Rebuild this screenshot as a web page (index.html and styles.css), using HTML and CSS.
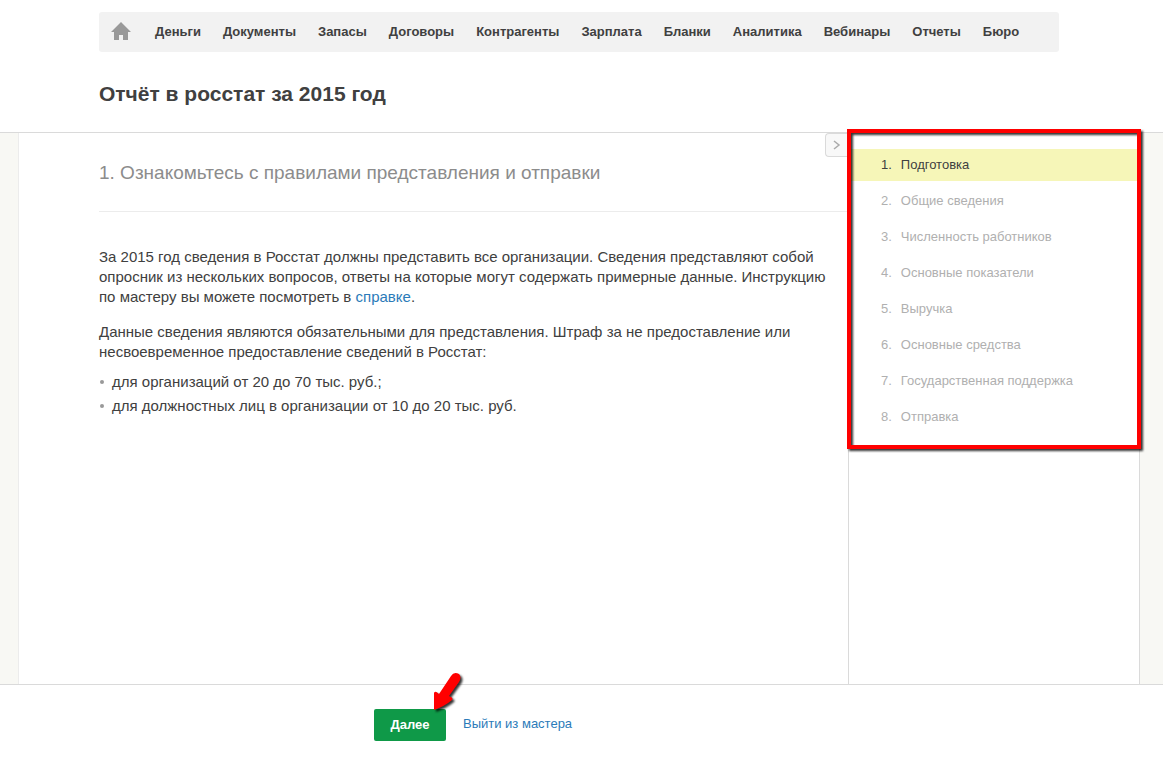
FILE: index.html
```html
<!DOCTYPE html>
<html lang="ru">
<head>
    <meta charset="UTF-8">
    <meta name="viewport" content="width=device-width, initial-scale=1.0">
    <title>Отчёт в росстат за 2015 год</title>
    <link rel="stylesheet" href="styles.css">
</head>
<body>
    <header class="header">
        <nav class="menu">
            <a class="menu-home" href="#" aria-label="Главная">
                <svg width="20" height="18" viewBox="0 0 20 18">
                    <path d="M10 0 L20 10 H17 V18 H12 V13 H8 V18 H3 V10 H0 Z" fill="#999"/>
                </svg>
            </a>
            <a href="#">Деньги</a>
            <a href="#">Документы</a>
            <a href="#">Запасы</a>
            <a href="#">Договоры</a>
            <a href="#">Контрагенты</a>
            <a href="#">Зарплата</a>
            <a href="#">Бланки</a>
            <a href="#">Аналитика</a>
            <a href="#">Вебинары</a>
            <a href="#">Отчеты</a>
            <a href="#">Бюро</a>
        </nav>
        <h1 class="page-title">Отчёт в росстат за 2015 год</h1>
    </header>

    <div class="wizard">
        <main class="content">
            <button class="toggle" type="button" aria-label="Свернуть">
                <svg width="8" height="10" viewBox="0 0 8 10">
                    <path d="M1 1 L6 5 L1 9" fill="none" stroke="#aaa" stroke-width="1.5"/>
                </svg>
            </button>
            <h2 class="step-title">1. Ознакомьтесь с правилами представления и отправки</h2>
            <div class="text">
                <p>За 2015 год сведения в Росстат должны представить все организации. Сведения представляют собой опросник из нескольких вопросов, ответы на которые могут содержать примерные данные. Инструкцию по мастеру вы можете посмотреть в <a href="#">справке</a>.</p>
                <p>Данные сведения являются обязательными для представления. Штраф за не предоставление или несвоевременное предоставление сведений в Росстат:</p>
                <ul>
                    <li>для организаций от 20 до 70 тыс. руб.;</li>
                    <li>для должностных лиц в организации от 10 до 20 тыс. руб.</li>
                </ul>
            </div>
        </main>
        <aside class="sidebar">
            <div class="steps-box">
                <ol class="steps">
                    <li class="active"><span>1.</span>Подготовка</li>
                    <li><span>2.</span>Общие сведения</li>
                    <li><span>3.</span>Численность работников</li>
                    <li><span>4.</span>Основные показатели</li>
                    <li><span>5.</span>Выручка</li>
                    <li><span>6.</span>Основные средства</li>
                    <li><span>7.</span>Государственная поддержка</li>
                    <li><span>8.</span>Отправка</li>
                </ol>
                <div class="frame"></div>
            </div>
        </aside>
    </div>

    <footer class="footer">
        <div class="next">
            <button class="btn-next" type="button">Далее</button>
            <svg class="arrow" width="34" height="44" viewBox="0 0 34 44">
                <path d="M3 42 L3 25 Q4 22 8 26 L20 8 Q23 3 28 6 Q31 9 28 14 L18 28 Q23 30 21 32 Q14 38 3 42 Z" fill="#f00"/>
            </svg>
        </div>
        <a class="exit" href="#">Выйти из мастера</a>
    </footer>
</body>
</html>
```
FILE: styles.css
```css
* {
    box-sizing: border-box;
}
body {
    margin: 0;
    min-height: 100vh;
    display: flex;
    flex-direction: column;
    font-family: "Liberation Sans", Arial, sans-serif;
    font-size: 15px;
    line-height: 20px;
    color: #404040;
    background-color: #fff;
}
a {
    color: #2b7bb9;
    text-decoration: none;
}
.header {
    padding: 12px 104px 26px 99px;
}
.menu {
    display: flex;
    align-items: center;
    gap: 22px;
    height: 40px;
    padding: 0 12px;
    background-color: #f2f2f2;
    border-radius: 3px;
    font-size: 13px;
    font-weight: bold;
}
.menu a {
    color: #404040;
}
.menu .menu-home {
    display: flex;
    padding: 0 2px 2px 0;
}
.page-title {
    margin: 30px 0 0;
    font-size: 21px;
    line-height: 24px;
}
.wizard {
    flex: 1;
    display: flex;
    padding: 0 23px 0 18px;
    background-color: #f8f8f4;
    border-top: 1px solid #dadada;
    border-bottom: 1px solid #dadada;
}
.content {
    position: relative;
    flex: 1;
    padding-left: 80px;
    background-color: #fff;
    border-left: 1px solid #ececec;
}
.toggle {
    position: absolute;
    top: 0;
    right: 0;
    width: 23px;
    height: 24px;
    padding: 0;
    background-color: #f8f8f8;
    border: 1px solid #dadada;
    border-right: none;
    border-radius: 4px 0 0 4px;
}
.step-title {
    margin: 0;
    padding: 28px 0 26px;
    border-bottom: 1px solid #ececec;
    font-size: 19px;
    font-weight: normal;
    line-height: 24px;
    color: #8c8c8c;
}
.text {
    padding: 35px 20px 0 0;
}
.text p {
    margin: 0 0 15px;
}
.text ul {
    list-style: none;
    margin: -7px 0 0;
    padding: 0;
}
.text li {
    display: flex;
    align-items: center;
    gap: 8px;
    padding-left: 1px;
    line-height: 24px;
}
.text li::before {
    content: "";
    width: 4px;
    height: 4px;
    border-radius: 50%;
    background-color: #999;
}
.sidebar {
    width: 292px;
    background-color: #fff;
    border-left: 1px solid #dadada;
    border-right: 1px solid #dadada;
}
.steps-box {
    position: relative;
    padding: 16px 0 12px;
}
.steps {
    display: flex;
    flex-direction: column;
    gap: 4px;
    list-style: none;
    margin: 0;
    padding: 0;
    font-size: 13px;
    color: #b0b0b0;
}
.steps li {
    display: flex;
    gap: 9px;
    padding: 6px 32px;
}
.steps .active {
    color: #404040;
    background-color: #f6f6b8;
}
.frame {
    position: absolute;
    top: -4px;
    right: -2px;
    bottom: -4px;
    left: -2px;
    border: 4px solid #f00;
    filter: drop-shadow(2px 2px 1px rgba(0, 0, 0, 0.8));
    pointer-events: none;
}
.footer {
    display: flex;
    align-items: center;
    gap: 17px;
    height: 72px;
    padding: 8px 0 0 374px;
    font-size: 13px;
}
.next {
    position: relative;
}
.btn-next {
    display: block;
    width: 72px;
    height: 32px;
    padding: 0 0 2px;
    border: none;
    border-radius: 2px;
    background-color: #0f9948;
    color: #fff;
    font-family: inherit;
    font-size: 13px;
    font-weight: bold;
}
.exit {
    padding-bottom: 2px;
}
.arrow {
    position: absolute;
    left: 57px;
    bottom: 29px;
    filter: drop-shadow(2px 2px 1px rgba(0, 0, 0, 0.8));
}
```
